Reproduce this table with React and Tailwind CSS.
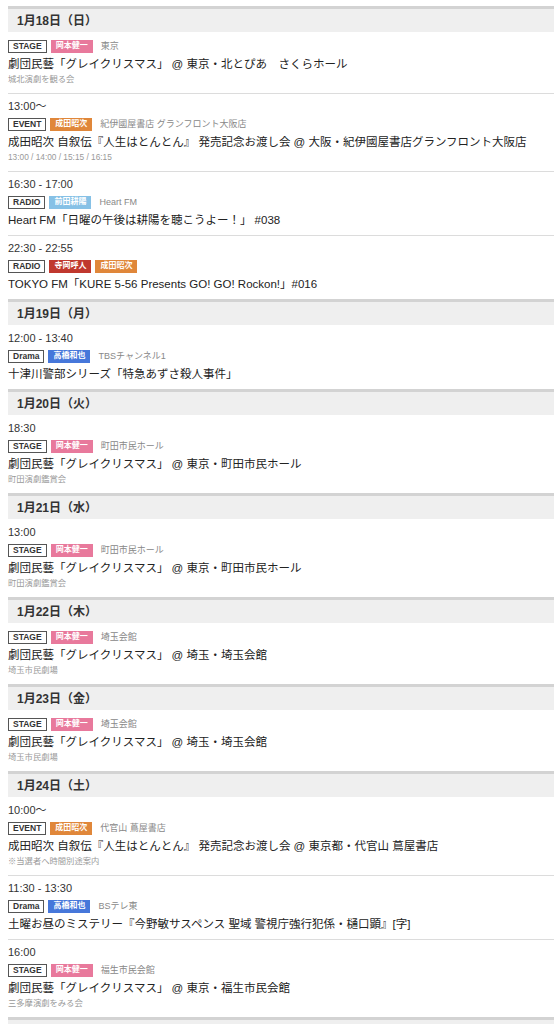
const PEOPLE = {
  okamoto: { name: "岡本健一", cls: "bg-[#e8799c]" },
  narita: { name: "成田昭次", cls: "bg-[#e0873a]" },
  maeda: { name: "前田耕陽", cls: "bg-[#86c1e6]" },
  teraoka: { name: "寺岡呼人", cls: "bg-[#c0382e]" },
  takahashi: { name: "高橋和也", cls: "bg-[#4677da]" },
};

const days = [
  {
    date: "1月18日（日）",
    items: [
      { type: "STAGE", people: ["okamoto"], place: "東京", title: "劇団民藝「グレイクリスマス」 @ 東京・北とぴあ　さくらホール", sub: "城北演劇を観る会" },
      { time: "13:00〜", type: "EVENT", people: ["narita"], place: "紀伊國屋書店 グランフロント大阪店", title: "成田昭次 自叙伝『人生はとんとん』 発売記念お渡し会 @ 大阪・紀伊國屋書店グランフロント大阪店", sub: "13:00 / 14:00 / 15:15 / 16:15" },
      { time: "16:30 - 17:00", type: "RADIO", people: ["maeda"], place: "Heart FM", title: "Heart FM「日曜の午後は耕陽を聴こうよー！」 #038" },
      { time: "22:30 - 22:55", type: "RADIO", people: ["teraoka", "narita"], title: "TOKYO FM「KURE 5-56 Presents GO! GO! Rockon!」#016" },
    ],
  },
  {
    date: "1月19日（月）",
    items: [
      { time: "12:00 - 13:40", type: "Drama", people: ["takahashi"], place: "TBSチャンネル1", title: "十津川警部シリーズ「特急あずさ殺人事件」" },
    ],
  },
  {
    date: "1月20日（火）",
    items: [
      { time: "18:30", type: "STAGE", people: ["okamoto"], place: "町田市民ホール", title: "劇団民藝「グレイクリスマス」 @ 東京・町田市民ホール", sub: "町田演劇鑑賞会" },
    ],
  },
  {
    date: "1月21日（水）",
    items: [
      { time: "13:00", type: "STAGE", people: ["okamoto"], place: "町田市民ホール", title: "劇団民藝「グレイクリスマス」 @ 東京・町田市民ホール", sub: "町田演劇鑑賞会" },
    ],
  },
  {
    date: "1月22日（木）",
    items: [
      { type: "STAGE", people: ["okamoto"], place: "埼玉会館", title: "劇団民藝「グレイクリスマス」 @ 埼玉・埼玉会館", sub: "埼玉市民劇場" },
    ],
  },
  {
    date: "1月23日（金）",
    items: [
      { type: "STAGE", people: ["okamoto"], place: "埼玉会館", title: "劇団民藝「グレイクリスマス」 @ 埼玉・埼玉会館", sub: "埼玉市民劇場" },
    ],
  },
  {
    date: "1月24日（土）",
    items: [
      { time: "10:00〜", type: "EVENT", people: ["narita"], place: "代官山 蔦屋書店", title: "成田昭次 自叙伝『人生はとんとん』 発売記念お渡し会 @ 東京都・代官山 蔦屋書店", sub: "※当選者へ時間別途案内" },
      { time: "11:30 - 13:30", type: "Drama", people: ["takahashi"], place: "BSテレ東", title: "土曜お昼のミステリー『今野敏サスペンス 聖域 警視庁強行犯係・樋口顕』[字]" },
      { time: "16:00", type: "STAGE", people: ["okamoto"], place: "福生市民会館", title: "劇団民藝「グレイクリスマス」 @ 東京・福生市民会館", sub: "三多摩演劇をみる会" },
    ],
  },
  { date: "", items: [] },
];

function Entry({ item, first }) {
  return (
    <div className={first ? "pt-[5px] pb-[5px]" : "pt-[4px] pb-[5px] border-t border-[#dcdcdc]"}>
      {item.time && (
        <div className="h-[17px] leading-[17px] text-[11px] text-[#333]">{item.time}</div>
      )}
      <div className="h-[18px] flex items-center gap-[4px]">
        <span className="h-[13px] px-[4px] border border-[#555] flex items-center text-[8.5px] font-bold text-[#333] leading-none">
          {item.type}
        </span>
        {item.people.map((p, i) => (
          <span
            key={i}
            className={`h-[13px] px-[5px] flex items-center text-[8px] font-bold text-white leading-none ${PEOPLE[p].cls}`}
          >
            {PEOPLE[p].name}
          </span>
        ))}
        {item.place && (
          <span className="ml-[4px] text-[9px] text-[#888] leading-none">{item.place}</span>
        )}
      </div>
      <div className="h-[19px] leading-[19px] text-[11.5px] text-[#222] whitespace-nowrap">{item.title}</div>
      {item.sub && (
        <div className="h-[14px] leading-[10px] text-[8.3px] text-[#999] whitespace-nowrap">{item.sub}</div>
      )}
    </div>
  );
}

export default function App() {
  return (
    <div
      className="bg-white w-[554px] h-[1024px] overflow-hidden pt-[6px] pl-[8px]"
      style={{ fontFamily: '"Liberation Sans", "Noto Sans CJK JP", sans-serif' }}
    >
      {days.map((d, i) => (
        <section key={i}>
          <div className="border-t-[3px] border-[#d3d3d3] bg-[#efefef] h-[26px] pl-[9px] flex items-center text-[12px] font-bold text-[#333]">
            {d.date}
          </div>
          <div>
            {d.items.map((it, j) => (
              <Entry key={j} item={it} first={j === 0} />
            ))}
          </div>
        </section>
      ))}
    </div>
  );
}
